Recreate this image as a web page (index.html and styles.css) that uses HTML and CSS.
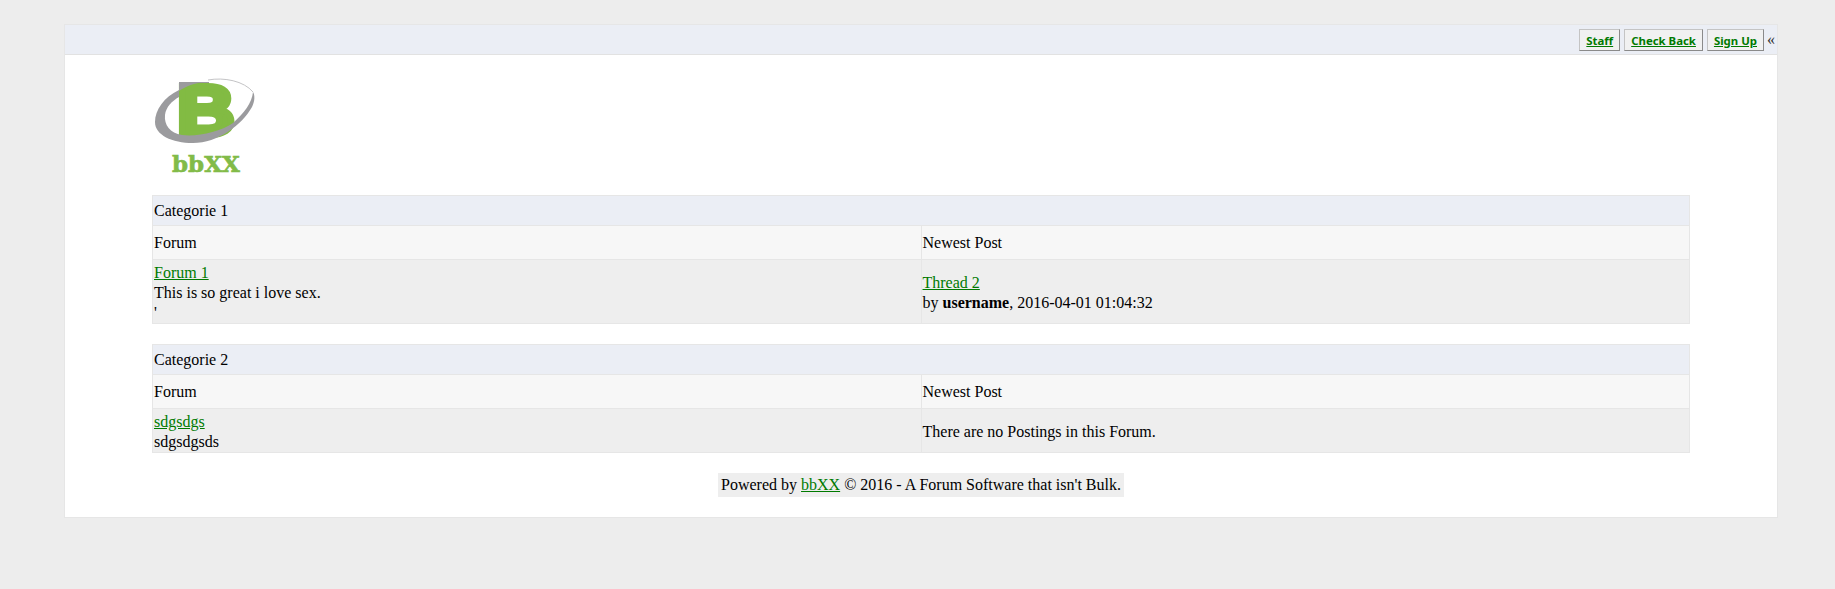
FILE: index.html
```html
<!DOCTYPE html>
<html lang="en">
<head>
    <meta charset="UTF-8">
    <meta name="viewport" content="width=device-width, initial-scale=1.0">
    <title>bbXX</title>
    <link rel="stylesheet" href="styles.css">
</head>
<body>
    <div class="wrapper">
        <div class="topbar">
            <a class="navbtn" href="#">Staff</a>
            <a class="navbtn" href="#">Check Back</a>
            <a class="navbtn" href="#">Sign Up</a>
            <span class="collapse">&laquo;</span>
        </div>
        <div class="content">
            <div class="logo">
                <svg width="108" height="108" viewBox="0 0 108 108">
                    <rect x="27" y="11" width="30" height="12" fill="#9b9b9e"/>
                    <text class="logo-b" x="22" y="64" transform="scale(1.14 1)">B</text>
                    <path d="M27 11 L52 11 C43 12 34 15 27 20 Z" fill="#9b9b9e"/>
                    <path d="M27 19 C12 26 3 39 3 51 C3 64 20 72 41 72 C66 72 90 54 100 36 C103 30 103 24 101 21 C100 32 92 42 81 52 C68 61 45 66 30 64 C18 62 12 54 13 44 C14 36 20 30 27 26 Z" fill="#9b9b9e"/>
                    <path d="M56 9 C72 6 92 10 101 21" fill="none" stroke="#c4c4c6" stroke-width="1"/>
                    <text class="logo-name" x="20" y="101">bbXX</text>
                </svg>
            </div>

            <table class="forums">
                <tr class="cat"><td colspan="2">Categorie 1</td></tr>
                <tr class="head"><td>Forum</td><td>Newest Post</td></tr>
                <tr class="row">
                    <td><a href="#">Forum 1</a><br>This is so great i love sex.<br>'</td>
                    <td><a href="#">Thread 2</a><br>by <b>username</b>, 2016-04-01 01:04:32</td>
                </tr>
            </table>

            <table class="forums">
                <tr class="cat"><td colspan="2">Categorie 2</td></tr>
                <tr class="head"><td>Forum</td><td>Newest Post</td></tr>
                <tr class="row">
                    <td><a href="#">sdgsdgs</a><br>sdgsdgsds</td>
                    <td>There are no Postings in this Forum.</td>
                </tr>
            </table>

            <div class="footer">
                <span class="powered">Powered by <a href="#">bbXX</a> &copy; 2016 - A Forum Software that isn't Bulk.</span>
            </div>
        </div>
    </div>
</body>
</html>
```

FILE: styles.css
```css
html, body {
    margin: 0;
    padding: 0;
}
body {
    background-color: #ededed;
    font-family: "Liberation Serif", "Times New Roman", serif;
    font-size: 16px;
    line-height: 20px;
    color: #000;
    padding: 24px 57px 60px 64px;
}
a {
    color: #007a00;
}
.wrapper {
    background-color: white;
    border: 1px solid #e6e6e6;
}
.topbar {
    display: flex;
    justify-content: flex-end;
    align-items: center;
    gap: 4px;
    height: 29px;
    padding-right: 1px;
    background-color: #ebeef5;
    border-bottom: 1px solid #e2e2e2;
}
.navbtn {
    display: block;
    height: 20px;
    padding: 0 6px;
    font-family: "Noto Sans", Tahoma, sans-serif;
    font-size: 11.4px;
    font-weight: bold;
    line-height: 22px;
    background-color: #f1f1f1;
    border: 1px solid #c4c4c4;
    border-right-color: #8a8a8a;
    border-bottom-color: #8a8a8a;
}
.collapse {
    width: 9px;
    margin-left: -1px;
    color: #333;
}
.content {
    padding: 16px 87px 20px 87px;
}
.logo {
    height: 124px;
}
.logo svg {
    display: block;
}
.logo-b {
    font-family: "Liberation Sans", Arial, sans-serif;
    font-weight: bold;
    font-size: 70px;
    fill: #82bb43;
    stroke: #82bb43;
    stroke-width: 6px;
}
.logo-name {
    font-family: "DejaVu Serif", serif;
    font-weight: bold;
    font-size: 23px;
    fill: #82bb48;
    stroke: #82bb48;
    stroke-width: 0.6px;
}
.forums {
    width: 100%;
    table-layout: fixed;
    border-collapse: collapse;
    margin-bottom: 20px;
}
.forums td {
    padding: 3px 1px 0;
    border: 1px solid #e6e6e6;
}
.cat td {
    background-color: #ebeef5;
    padding: 5px 1px 4px;
}
.head td {
    background-color: #f7f7f7;
    padding: 7px 1px 6px;
}
.row td {
    background-color: #eeeeee;
}
.footer {
    text-align: center;
}
.powered {
    display: inline-block;
    padding: 2px 3px;
    background-color: #eeeeee;
}
```
